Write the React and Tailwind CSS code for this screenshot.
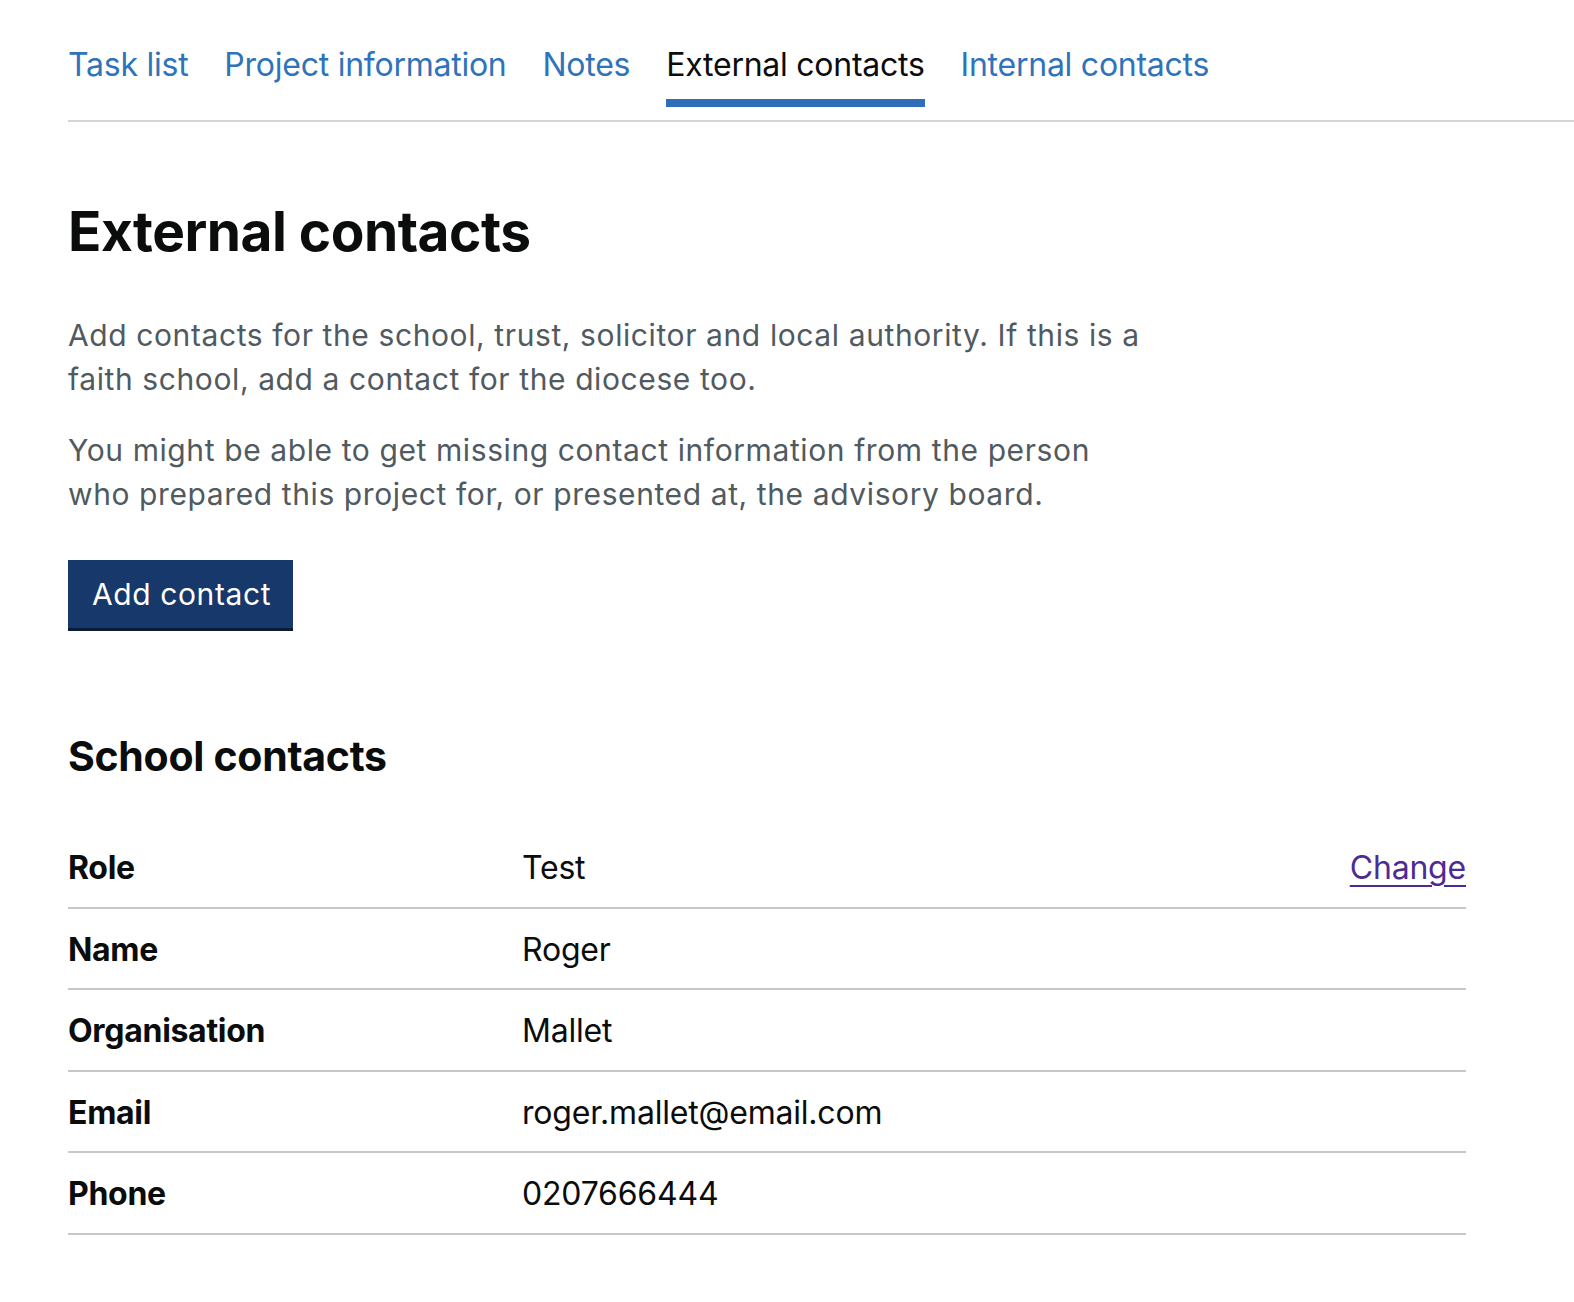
const TABS = [
  { label: 'Task list' },
  { label: 'Project information' },
  { label: 'Notes' },
  { label: 'External contacts', active: true },
  { label: 'Internal contacts' },
]

const ROWS = [
  { key: 'Role', value: 'Test', action: 'Change' },
  { key: 'Name', value: 'Roger' },
  { key: 'Organisation', value: 'Mallet' },
  { key: 'Email', value: 'roger.mallet@email.com' },
  { key: 'Phone', value: '0207666444' },
]

function Tab({ label, active }) {
  return (
    <li className="flex flex-col mr-[36px]">
      <a
        href="#"
        className={`text-[32px] leading-[40px] tracking-[-0.25px] ${
          active ? 'text-[#0b0c0c]' : 'text-[#2f73ba]'
        }`}
      >
        {label}
      </a>
      <span className={`mt-[14px] h-[8px] ${active ? 'bg-[#2f6fb8]' : 'bg-transparent'}`} />
    </li>
  )
}

function SummaryRow({ row }) {
  return (
    <div className="flex border-b-2 border-[#c6c9cb] pt-[21px] pb-[19.5px] text-[32px] leading-[39px] text-[#0b0c0c]">
      <dt className="w-[454px] shrink-0 font-bold tracking-[-0.3px]">{row.key}</dt>
      <dd className="flex-1 tracking-[-0.2px]">{row.value}</dd>
      {row.action && (
        <dd>
          <a href="#" className="text-[#4c2c92] underline underline-offset-[6px] decoration-2 tracking-[-0.2px]">
            {row.action}
          </a>
        </dd>
      )}
    </div>
  )
}

export default function App() {
  return (
    <div className="min-h-screen bg-white pb-20" style={{ fontFamily: 'Inter, "Noto Sans", sans-serif' }}>
      <nav className="ml-[68px] pt-[45px] border-b-2 border-[#d3d6d8]">
        <ul className="flex pb-[13px]">
          {TABS.map((tab) => (
            <Tab key={tab.label} {...tab} />
          ))}
        </ul>
      </nav>

      <main className="px-[68px]">
        <h1 className="mt-[77px] text-[55px] leading-[65px] font-bold text-[#0b0c0c] tracking-[-0.5px]">
          External contacts
        </h1>

        <div className="mt-[49px] max-w-[1078px] text-[30px] leading-[44px] text-[#505a5f] tracking-[0.6px]">
          <p>
            Add contacts for the school, trust, solicitor and local authority. If this is a faith school, add a
            contact for the diocese too.
          </p>
          <p className="mt-[27px]">
            You might be able to get missing contact information from the person who prepared this project for, or
            presented at, the advisory board.
          </p>
        </div>

        <button
          type="button"
          className="mt-[44px] h-[68px] pl-[24px] pr-[22px] bg-[#17386a] text-white text-[30px] leading-none shadow-[0_3px_0_#0b1c35] tracking-[0.6px]"
        >
          Add contact
        </button>

        <h2 className="mt-[103px] text-[41px] leading-[51px] font-bold text-[#0b0c0c] tracking-[-0.3px]">
          School contacts
        </h2>

        <dl className="mt-[45px] w-[1398px]">
          {ROWS.map((row) => (
            <SummaryRow key={row.key} row={row} />
          ))}
        </dl>
      </main>
    </div>
  )
}
